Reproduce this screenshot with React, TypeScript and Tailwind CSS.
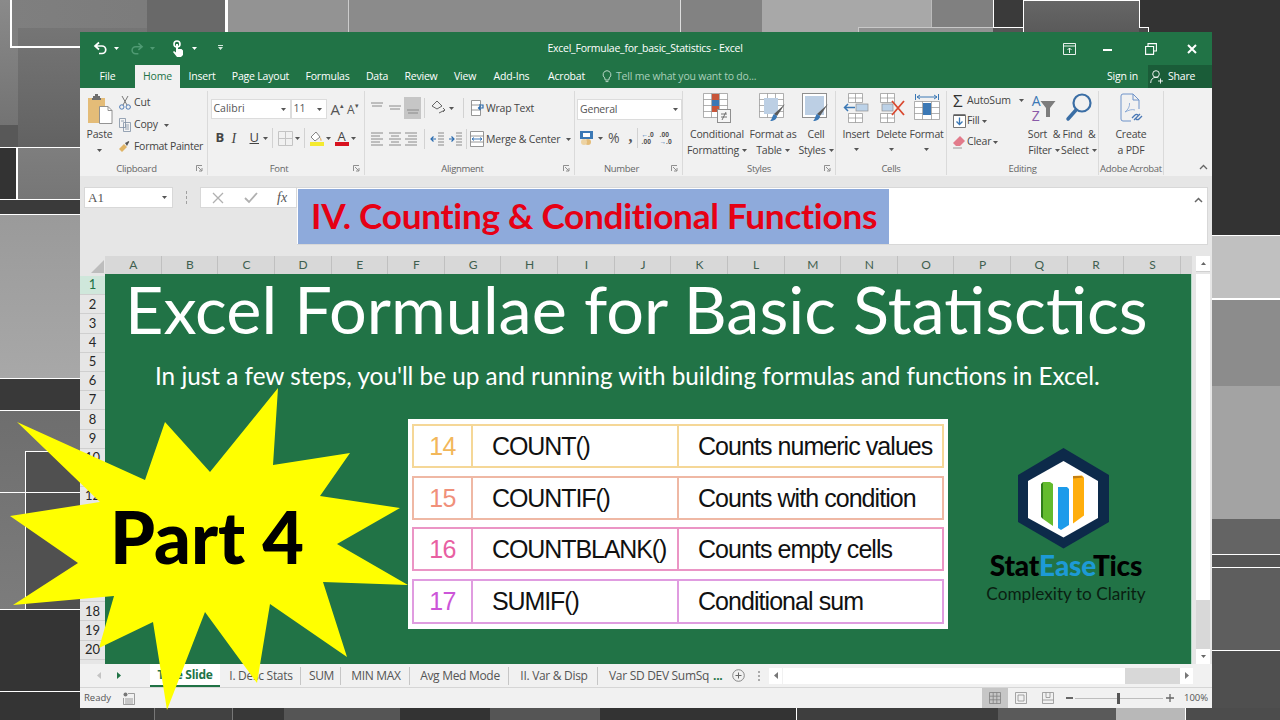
import React from "react";

const ui = "font-['Open_Sans',sans-serif]";
const cal = "font-['Lato',sans-serif]";

const bgRects = [
  "left-[0px] top-[0px] w-[80px] h-[125px] bg-linear-to-b from-[#8a8a8a] to-[#737373]",
  "left-[10px] top-[0px] w-[217px] h-[48px] bg-linear-to-r from-[#7f7f7f] to-[#7a7a7a]",
  "left-[147px] top-[0px] w-[79px] h-[33px] bg-[#696969]",
  "left-[18px] top-[28px] w-[129px] h-[119px] bg-linear-to-b from-[#757575] to-[#626262]",
  "left-[10px] top-[-2px] w-[217px] h-[50px] border-2 border-white",
  "left-[0px] top-[125px] w-[18px] h-[22px] bg-[#585858]",
  "left-[0px] top-[147px] w-[18px] h-[53px] bg-[#333333] border-t border-r-2 border-b border-white",
  "left-[18px] top-[147px] w-[62px] h-[53px] bg-linear-to-b from-[#7e7e7e] to-[#767676] border-t border-b border-white",
  "left-[0px] top-[200px] w-[80px] h-[15px] bg-[#3a3a3a] border-b border-white",
  "left-[0px] top-[215px] w-[80px] h-[163px] bg-linear-to-b from-[#9a9a9a] to-[#a8a8a8]",
  "left-[0px] top-[378px] w-[80px] h-[33px] bg-[#393939] border-t border-b border-white",
  "left-[0px] top-[411px] w-[80px] h-[198px] bg-linear-to-b from-[#6e6e6e] to-[#7c7c7c]",
  "left-[25px] top-[451px] w-[55px] h-[158px] bg-[#505050] border-t border-l border-white",
  "left-[0px] top-[492px] w-[80px] h-[1px] bg-white",
  "left-[0px] top-[609px] w-[80px] h-[111px] bg-[#343434] border-t border-white",
  "left-[0px] top-[691px] w-[80px] h-[1px] bg-white",
  "left-[226px] top-[0px] w-[122px] h-[33px] bg-[#939393] border-l-2 border-white",
  "left-[348px] top-[0px] w-[332px] h-[33px] bg-[#8b8b8b] border-l border-[#cccccc]",
  "left-[680px] top-[0px] w-[82px] h-[33px] bg-[#828282] border-l border-[#dddddd]",
  "left-[762px] top-[0px] w-[169px] h-[33px] bg-[#a8a8a8]",
  "left-[931px] top-[0px] w-[62px] h-[33px] bg-[#808080] border-l border-[#bbbbbb]",
  "left-[858px] top-[27px] w-[136px] h-[6px] bg-[#929292] border-t border-l border-[#c8c8c8]",
  "left-[993px] top-[0px] w-[30px] h-[33px] bg-[#3a3a3a] border-l border-white",
  "left-[993px] top-[27px] w-[30px] h-[6px] bg-[#555555] border-t border-white",
  "left-[1023px] top-[0px] w-[117px] h-[33px] bg-linear-to-b from-[#666666] to-[#5a5a5a] border border-white",
  "left-[1139px] top-[27px] w-[10px] h-[6px] bg-[#4a4a4a] border-t border-r border-white",
  "left-[1212px] top-[235px] w-[68px] h-[65px] bg-[#c0c0c0] border-t border-b-2 border-white",
  "left-[1212px] top-[300px] w-[68px] h-[86px] bg-[#8c8c8c]",
  "left-[1212px] top-[386px] w-[68px] h-[133px] bg-[#a3a3a3]",
  "left-[1212px] top-[519px] w-[68px] h-[35px] bg-[#646464]",
  "left-[1212px] top-[554px] w-[68px] h-[14px] bg-[#555555] border-t border-b border-white",
  "left-[1212px] top-[568px] w-[68px] h-[83px] bg-[#5e5e5e] border-b border-white",
  "left-[1212px] top-[651px] w-[68px] h-[69px] bg-[#4f4f4f]",
  "left-[80px] top-[708px] w-[74px] h-[12px] bg-[#3a3a3a]",
  "left-[154px] top-[708px] w-[78px] h-[12px] bg-[#414141] border-l border-[#777777]",
  "left-[232px] top-[708px] w-[52px] h-[12px] bg-[#383838] border-l border-[#777777]",
  "left-[284px] top-[708px] w-[116px] h-[12px] bg-[#555555]",
  "left-[490px] top-[708px] w-[110px] h-[12px] bg-[#555555]",
  "left-[796px] top-[708px] w-[202px] h-[12px] bg-[#3e3e3e] border-l border-white",
  "left-[998px] top-[708px] w-[118px] h-[12px] bg-[#5a5a5a]",
  "left-[1116px] top-[708px] w-[69px] h-[12px] bg-[#b8b8b8]",
  "left-[1185px] top-[708px] w-[95px] h-[12px] bg-[#4c4c4c] border-l border-white",
];

const Caret = ({ c = "#555", s = "" }: { c?: string; s?: string }) => (
  <svg width="5" height="3" viewBox="0 0 5 3" className={s}><path d="M0 0h5L2.5 3z" fill={c} /></svg>
);

const Sep = ({ s = "" }: { s?: string }) => (
  <div className={`w-px bg-[#d2d2d2] h-[20px] ${s}`} />
);

const Label = ({ t, launcher, center }: { t: string; launcher?: boolean; center?: boolean }) => (
  <div className={`relative h-[13px] flex items-center justify-center text-[9.5px] leading-none text-[#666666] whitespace-nowrap tracking-[-0.3px] ${launcher && !center ? "pr-[14px]" : ""}`}>
    {t}
    {launcher && (
      <svg width="7" height="7" viewBox="0 0 7 7" className="absolute right-[4px] top-[3px]">
        <path d="M.5 6V.5H6M2 2l3.5 3.5M6 3v3H3" fill="none" stroke="#777" strokeWidth="0.8" />
      </svg>
    )}
  </div>
);

const Group = ({ w, label, launcher, center, children }: { w: string; label: string; launcher?: boolean; center?: boolean; children: React.ReactNode }) => (
  <div className={`${w} shrink-0 flex flex-col border-r border-[#dadada] mt-[3px] mb-[1px]`}>
    <div className="flex-1 min-h-0 flex">{children}</div>
    <Label t={label} launcher={launcher} center={center} />
  </div>
);

const Big = ({ w, icon, lines, caret }: { w: string; icon: React.ReactNode; lines: string[]; caret?: boolean }) => (
  <div className={`${w} shrink-0 flex flex-col items-center text-[10.5px] text-[#444444] leading-[16px] whitespace-nowrap tracking-[-0.2px]`}>
    <div className="h-[35px] pt-[2px] flex items-start justify-center">{icon}</div>
    {lines.map((l, i) => (
      <div key={i} className="h-[16px] flex items-center gap-[3px]">
        {l}
        {caret && i === lines.length - 1 && <Caret />}
      </div>
    ))}
    {lines.length === 1 && <Caret s="mt-[6px]" />}
  </div>
);

const TITLE = "Excel_Formulae_for_basic_Statistics - Excel";

const tabs: [string, string][] = [
  ["File", "w-[55px]"],
  ["Home", "w-[45px]"],
  ["Insert", "w-[44px]"],
  ["Page Layout", "w-[73px]"],
  ["Formulas", "w-[61px]"],
  ["Data", "w-[38px]"],
  ["Review", "w-[50px]"],
  ["View", "w-[38px]"],
  ["Add-Ins", "w-[55px]"],
  ["Acrobat", "w-[55px]"],
];

const TitleBar = () => (
  <div className="h-[33px] shrink-0 flex items-center bg-[#217346] text-white">
    <div className="w-[565px] flex items-center pl-[13px]">
      <svg width="15" height="15" viewBox="0 0 15 15"><path d="M6 1.5 2 5l4 3.5M2.5 5H9a3.7 3.7 0 0 1 0 7.5H6" fill="none" stroke="#fff" strokeWidth="1.7" /></svg>
      <Caret c="#fff" s="ml-[6px]" />
      <svg width="14" height="14" viewBox="0 0 15 15" className="ml-[11px]"><path d="M9 1.5 13 5 9 8.5M12.5 5H6a3.7 3.7 0 0 0 0 7.5h3" fill="none" stroke="#4f9a73" strokeWidth="1.6" /></svg>
      <Caret c="#4f9a73" s="ml-[6px]" />
      <svg width="14" height="18" viewBox="0 0 14 18" className="ml-[16px]"><circle cx="6" cy="4" r="3" fill="none" stroke="#fff" strokeWidth="1.6" /><path d="M5 4h2v5h3.5l1.5 1.5V15l-2 2H6L2 12l1-1 2 1.5z" fill="#fff" /></svg>
      <Caret c="#fff" s="ml-[7px]" />
      <svg width="7" height="7" viewBox="0 0 7 7" className="ml-[20px]"><path d="M1 0h5v1H1zM1 2h5L3.5 5z" fill="#d6e8de" /></svg>
    </div>
    <div className={`w-[0px] flex justify-center text-[10.5px] whitespace-nowrap ${ui} tracking-[-0.25px]`}>{TITLE}</div>
    <div className="flex-1 flex items-center justify-end">
      <svg width="13" height="12" viewBox="0 0 13 12" className="mr-[27px]"><path d="M.5.5h12v11H.5zM.5 3h12M6.5 10V5M4.5 7l2-2 2 2" fill="none" stroke="#fff" strokeWidth="0.9" /></svg>
      <div className="w-[9px] h-[2px] bg-white mr-[33px] mt-[2px]" />
      <svg width="12" height="12" viewBox="0 0 12 12" className="mr-[30px]"><path d="M3 3V.6h8.4V8H9M.6 3.5h8V11.4h-8z" fill="none" stroke="#fff" strokeWidth="1.1" /></svg>
      <svg width="10" height="10" viewBox="0 0 10 10" className="mr-[15px]"><path d="M1 1l8 8M9 1l-8 8" stroke="#fff" strokeWidth="2" /></svg>
    </div>
  </div>
);

const TabBar = () => (
  <div className={`h-[23px] shrink-0 flex items-stretch bg-[#217346] text-white text-[10.5px] tracking-[-0.2px] whitespace-nowrap ${ui}`}>
    {tabs.map(([t, w]) => (
      <div key={t} className={`${w} flex items-center justify-center ${t === "Home" ? "bg-[#f1f1f1] text-[#217346]" : ""}`}>{t}</div>
    ))}
    <div className="flex items-center ml-[8px] text-[#a9cfba]">
      <svg width="10" height="13" viewBox="0 0 10 13" className="mr-[4px]"><path d="M5 .7a4 4 0 0 1 2.3 7.2L6.8 10H3.2l-.5-2.1A4 4 0 0 1 5 .7zM3.6 11.6h2.8" fill="none" stroke="#c9e2d5" strokeWidth="0.9" /></svg>
      Tell me what you want to do...
    </div>
    <div className="flex-1" />
    <div className="flex items-center mr-[10px]">Sign in</div>
    <div className="w-[64px] bg-[#1a5c38] flex items-center pl-[2px] gap-[4px]">
      <svg width="14" height="14" viewBox="0 0 14 14"><circle cx="6" cy="4" r="3.3" fill="none" stroke="#fff" strokeWidth="0.9" /><path d="M.7 13c0-3.4 2-5.7 5.3-5.7 1 0 1.700.2 2.300.5M10.500 8.500v5M8 11h5" fill="none" stroke="#fff" strokeWidth="0.9" /></svg>
      Share
    </div>
  </div>
);

const cellLines = "#8f8f8f";

const PasteIcon = () => (
  <svg width="26" height="32" viewBox="0 0 26 32">
    <rect x="1" y="4" width="17" height="25" fill="#e4bc78" />
    <path d="M6 4V2h2V0h3v2h2v2h1v2H5V4z" fill="#6d6d6d" />
    <path d="M12.500 12.500H21l4 4v13H12.500z" fill="#fff" stroke="#888" strokeWidth="0.9" />
    <path d="M21 12.500v4h4" fill="none" stroke="#888" strokeWidth="0.9" />
  </svg>
);

const Clipboard = () => (
  <Group w="w-[128px]" label="Clipboard" launcher>
    <div className="w-[39px] flex flex-col items-center text-[10.5px] text-[#444444] tracking-[-0.2px]">
      <div className="mt-[3px]"><PasteIcon /></div>
      <div className="mt-[1px] leading-[14px]">Paste</div>
      <Caret s="mt-[8px]" />
    </div>
    <div className="flex flex-col text-[10.5px] text-[#444444] tracking-[-0.2px] whitespace-nowrap pt-[1px]">
      <div className="h-[22px] flex items-center gap-[3px]">
        <svg width="12" height="14" viewBox="0 0 12 14"><path d="M3 0l5 9M9 0 4 9" stroke="#777" strokeWidth="1" /><circle cx="2.800" cy="11" r="2.200" fill="none" stroke="#4e7ab5" /><circle cx="9.200" cy="11" r="2.200" fill="none" stroke="#4e7ab5" /></svg>
        Cut
      </div>
      <div className="h-[22px] flex items-center gap-[3px]">
        <svg width="12" height="14" viewBox="0 0 12 14"><path d="M.5.5h6v9h-6zM4.500 4.500h7v9h-7zM2 3h3M6 7h4M6 9h4M6 11h4" fill="#f4f4f4" stroke="#7f8fa3" strokeWidth="0.8" /></svg>
        <span>Copy</span>
        <Caret s="ml-[3px]" />
      </div>
      <div className="h-[22px] flex items-center gap-[2px]">
        <svg width="13" height="12" viewBox="0 0 13 12"><path d="M0 8l5-5 3 3-5 5z" fill="#e0b465" /><path d="M6 2l2-1 1.500-1 .8.800L9 3l-1 2z" fill="#555" /></svg>
        <span className="tracking-[-0.3px]">Format Painter</span>
      </div>
    </div>
  </Group>
);

const Inp = ({ w, t }: { w: string; t: string }) => (
  <div className={`${w} h-[20px] bg-white border border-[#dcdcdc] flex items-center pl-[2px] pr-[4px] justify-between text-[10.5px] text-[#555555]`}>
    {t}
    <Caret />
  </div>
);

const FontG = () => (
  <Group w="w-[157px]" label="Font" launcher>
    <div className="flex flex-col pl-[2.500px] pt-[8px]">
      <div className="flex items-center">
        <Inp w="w-[80px]" t="Calibri" />
        <Inp w="w-[36px]" t="11" />
        <span className={`ml-[4px] text-[15px] leading-none text-[#555555] ${ui}`}>A</span>
        <span className="text-[7px] leading-none self-start text-[#555555] mt-[3px]">▴</span>
        <span className={`ml-[3px] text-[12px] leading-none text-[#555555] mt-[2px] ${ui}`}>A</span>
        <span className="text-[7px] leading-none self-start text-[#555555] mt-[3px]">▾</span>
      </div>
      <div className="flex items-center h-[20px] mt-[9px] pl-[5px] text-[#444444] text-[13px]">
        <span className={`w-[16px] font-bold ${ui}`}>B</span>
        <span className="w-[18px] italic font-['Liberation_Serif',serif] text-[14px]">I</span>
        <span className="underline font-['Open_Sans',sans-serif] w-[13px]">U</span>
        <Caret />
        <Sep s="ml-[4px]" />
        <svg width="15" height="15" viewBox="0 0 15 15" className="ml-[5px]"><path d="M.5.5h14v14H.5zM7.500.5v14M.5 7.500h14" fill="none" stroke="#c4c4c4" /></svg>
        <Caret s="ml-[2px]" />
        <Sep s="ml-[4px]" />
        <svg width="15" height="16" viewBox="0 0 15 16" className="ml-[4px]"><path d="M2 7l5-5 4 5-5 4z" fill="#fff" stroke="#666" strokeWidth="0.8" /><path d="M11 7c2 2 2 4 1 4s-1-2-1-4z" fill="#e4bc78" /><rect x="1" y="12" width="14" height="4" fill="#f4ea2f" /></svg>
        <Caret s="ml-[2px]" />
        <div className="ml-[4px] w-[14px] h-[16px] flex flex-col items-center">
          <span className={`text-[13px] leading-[12px] text-[#444444] ${ui}`}>A</span>
          <div className="w-[14px] h-[4px] bg-[#d8121f]" />
        </div>
        <Caret s="ml-[2px]" />
      </div>
    </div>
  </Group>
);

const AlignIcon = ({ kind }: { kind: string }) => {
  const rows: Record<string, string> = {
    top: "M1 2h12M2 5h10",
    mid: "M1 5h12M2 8h10",
    bot: "M1 9h12M2 12h10",
    l: "M1 1h12M1 4h9M1 7h12M1 10h9M1 13h12",
    c: "M1 1h12M3 4h8M1 7h12M3 10h8M1 13h12",
    r: "M1 1h12M4 4h9M1 7h12M4 10h9M1 13h12",
  };
  return (
    <svg width="14" height="14" viewBox="0 0 14 14"><path d={rows[kind]} stroke="#8a8a8a" strokeWidth="1" /></svg>
  );
};

const Alignment = () => (
  <Group w="w-[210px]" label="Alignment" launcher>
    <div className="flex flex-col pl-[5px] pt-[5px] text-[10.5px] text-[#444444] tracking-[-0.2px] whitespace-nowrap">
      <div className="flex items-center h-[24px]">
        <div className="w-[18px]"><AlignIcon kind="top" /></div>
        <div className="w-[16px]"><AlignIcon kind="mid" /></div>
        <div className="w-[17px] h-[22px] bg-[#c6c6c6] flex items-center justify-center"><AlignIcon kind="bot" /></div>
        <Sep s="ml-[3px]" />
        <svg width="16" height="16" viewBox="0 0 16 16" className="ml-[6px]"><path d="M1 6l5-5 5 5-5 3zM8 13l6-3M12 8l2 2-2 2" fill="none" stroke="#666" strokeWidth="1" /></svg>
        <Caret s="ml-[2px]" />
        <Sep s="ml-[9px]" />
        <svg width="14" height="16" viewBox="0 0 14 16" className="ml-[7px]"><path d="M.5.500h9v15h-9zM.5 5h9M.5 10h9" fill="#fff" stroke="#8a8a8a" strokeWidth="0.9" /><path d="M8 5h4v3H8M9.500 6l-2 2 2 2" fill="none" stroke="#2b6cb0" strokeWidth="1.200" /></svg>
        <span className="ml-[1px] pt-[2px]">Wrap Text</span>
      </div>
      <div className="flex items-center h-[24px] mt-[7px]">
        <div className="w-[18px]"><AlignIcon kind="l" /></div>
        <div className="w-[16px]"><AlignIcon kind="c" /></div>
        <div className="w-[17px]"><AlignIcon kind="r" /></div>
        <Sep s="ml-[3px]" />
        <svg width="14" height="14" viewBox="0 0 14 14" className="ml-[5px]"><path d="M8 1h6M8 4h6M8 7h6M8 10h6M8 13h6" stroke="#8a8a8a" /><path d="M6 7H1M3.500 4.500 1 7l2.500 2.500" fill="none" stroke="#2b6cb0" strokeWidth="1.200" /></svg>
        <svg width="14" height="14" viewBox="0 0 14 14" className="ml-[4px]"><path d="M8 1h6M8 4h6M8 7h6M8 10h6M8 13h6" stroke="#8a8a8a" /><path d="M1 7h5M3.500 4.500 6 7 3.500 9.500" fill="none" stroke="#2b6cb0" strokeWidth="1.200" /></svg>
        <Sep s="ml-[4px]" />
        <svg width="14" height="16" viewBox="0 0 14 16" className="ml-[3px]"><path d="M.5.500h13v15H.5zM.5 5h13M.5 11h13" fill="#fff" stroke="#8a8a8a" strokeWidth="0.9" /><path d="M2 8h10M4 6.500 2 8l2 1.500M10 6.500 12 8l-2 1.500" fill="none" stroke="#2b6cb0" strokeWidth="0.9" /></svg>
        <span className="ml-[2px] pt-[2px]">Merge &amp; Center</span>
        <Caret s="ml-[6px]" />
      </div>
    </div>
  </Group>
);

const NumberG = () => (
  <Group w="w-[108px]" label="Number" launcher>
    <div className="flex flex-col pl-[2px] pt-[8px]">
      <div className="w-[105px] h-[21px] bg-white border border-[#dcdcdc] flex items-center justify-between pl-[2px] pr-[3px] text-[10.5px] text-[#555555] tracking-[-0.2px]">
        General<Caret />
      </div>
      <div className="flex items-center h-[20px] mt-[8px] pl-[3px] text-[#555555]">
        <svg width="15" height="15" viewBox="0 0 15 15"><rect x="0" y="0" width="13" height="8" fill="#3b78b5" /><rect x="3" y="2" width="7" height="4" fill="#fff" /><circle cx="8" cy="11" r="3" fill="#e4bc78" /><circle cx="4" cy="11" r="3" fill="#edd3a3" /></svg>
        <Caret s="ml-[3px]" />
        <span className={`ml-[5px] text-[14px] ${ui} leading-none`}>%</span>
        <span className="ml-[9px] text-[16px] font-bold leading-none font-['Liberation_Serif',serif] mb-[3px]">,</span>
        <Sep s="ml-[4px]" />
        <div className={`ml-[4px] w-[17px] text-[6.5px] leading-[7px] font-bold text-[#555555] ${ui}`}><span className="text-[#2b6cb0]">←</span>.0<br />.00</div>
        <div className={`ml-[1px] w-[15px] text-[6.5px] leading-[7px] font-bold text-[#555555] ${ui}`}>.00<br /><span className="text-[#2b6cb0]">→</span>.0</div>
      </div>
    </div>
  </Group>
);

const GridBase = ({ fill }: { fill?: React.ReactNode }) => (
  <>
    <path d="M.5.5h24v24H.5zM.5 6.500h24M.5 12.500h24M.5 18.500h24M8.500.5v24M16.500.5v24" fill="#fff" stroke={cellLines} strokeWidth="0.7" />
    {fill}
  </>
);

const Brush = () => (
  <>
    <path d="M26 11 18 23l-3-2z" fill="#5a5a5a" />
    <path d="M15 21l3 2c0 3-3 5-7 5 2-1 2-5 4-7z" fill="#3b78b5" />
  </>
);

const Styles = () => (
  <Group w="w-[153px]" label="Styles" launcher center>
    <div className="flex pl-[2px]">
      <Big w="w-[64px]" lines={["Conditional", "Formatting"]} caret icon={
        <svg width="28" height="30" viewBox="0 0 28 30"><GridBase fill={<><rect x="9" y="1" width="7" height="6" fill="#c8563a" /><rect x="9" y="7" width="7" height="6" fill="#3b78b5" /><rect x="9" y="13" width="7" height="6" fill="#c8563a" /></>} /><rect x="14.500" y="16.500" width="13" height="13" fill="#f6f6f6" stroke="#8f8f8f" /><path d="M18 21h6M18 24h6M23 19l-4 8" stroke="#555" strokeWidth="0.8" /></svg>
      } />
      <Big w="w-[48px]" lines={["Format as", "Table"]} caret icon={
        <svg width="28" height="30" viewBox="0 0 28 30"><GridBase fill={<rect x="5" y="5" width="14" height="16" fill="#bccfe4" />} /><Brush /></svg>
      } />
      <Big w="w-[38px]" lines={["Cell", "Styles"]} caret icon={
        <svg width="28" height="30" viewBox="0 0 28 30"><rect x=".5" y=".5" width="24" height="24" fill="#fff" stroke="#8f8f8f" /><rect x="3" y="3" width="19" height="19" fill="#bccfe4" /><Brush /></svg>
      } />
    </div>
  </Group>
);

const Cells = () => (
  <Group w="w-[111px]" label="Cells">
    <div className="flex pl-[2px]">
      <Big w="w-[36px]" lines={["Insert"]} icon={
        <svg width="26" height="30" viewBox="0 0 26 30"><path d="M5.500.5h14v9h-14zM12.500.5v9M5.500 20.500h14v9h-14zM12.500 20.500v9M5.500 25h14M5.500 5h14" fill="#fff" stroke="#8f8f8f" strokeWidth="0.7" /><rect x="13" y="11" width="12" height="7" fill="#bcd2e8" stroke="#8f8f8f" strokeWidth="0.7" /><path d="M12 14.500H2M5 11l-3.500 3.500L5 18" fill="none" stroke="#3b78b5" strokeWidth="1.500" /></svg>
      } />
      <Big w="w-[35px]" lines={["Delete"]} icon={
        <svg width="26" height="30" viewBox="0 0 26 30"><path d="M1.500.5h14v9h-14zM8.500.5v9M1.500 20.500h14v9h-14zM8.500 20.500v9M1.500 25h14M1.500 5h14" fill="#fff" stroke="#8f8f8f" strokeWidth="0.7" /><rect x="3" y="11" width="11" height="7" fill="#bcd2e8" stroke="#8f8f8f" strokeWidth="0.7" /><path d="M13 8l12 14M25 8 13 22" stroke="#d9482f" strokeWidth="1.800" /></svg>
      } />
      <Big w="w-[35px]" lines={["Format"]} icon={
        <svg width="26" height="30" viewBox="0 0 26 30"><path d="M1.500 1v6M24.500 1v6M3 4h20M6 2 3 4l3 2M20 2l3 2-3 2" fill="none" stroke="#3b78b5" strokeWidth="1" /><path d="M.5 8.500h25v18H.5zM8.500 8.500v18M17.500 8.500v18M.5 14.500h25M.5 20.500h25" fill="#fff" stroke="#8f8f8f" strokeWidth="0.7" /><rect x="9" y="10" width="8" height="12" fill="#3b78b5" /></svg>
      } />
    </div>
  </Group>
);

const Editing = () => (
  <Group w="w-[152px]" label="Editing">
    <div className="flex pl-[6px] text-[10.5px] text-[#444444] tracking-[-0.2px] whitespace-nowrap">
      <div className="w-[74px] flex flex-col">
        <div className="h-[19px] flex items-center"><span className={`w-[14px] text-[17px] leading-none text-[#333333] ${ui}`}>Σ</span>AutoSum<Caret s="ml-[8px]" /></div>
        <div className="h-[22px] flex items-center">
          <svg width="13" height="14" viewBox="0 0 13 14" className="mr-[1px]"><path d="M.5 1.500h12v12H.5z" fill="#fff" stroke="#777" /><path d="M.5 1h12" stroke="#555" strokeWidth="1.500" /><path d="M6.500 3.500v7M3.500 7.500l3 3 3-3" fill="none" stroke="#3b78b5" strokeWidth="1.300" /></svg>
          Fill<Caret s="ml-[2px]" />
        </div>
        <div className="h-[20px] flex items-center">
          <svg width="13" height="13" viewBox="0 0 13 13" className="mr-[1px]"><path d="M7 0l5 5-5 5H3L0 7z" fill="#e27b8b" /><path d="M0 12h9" stroke="#999" /></svg>
          Clear<Caret s="ml-[2px]" />
        </div>
      </div>
      <Big w="w-[34px] [word-spacing:3px]" lines={["Sort &", "Filter"]} caret icon={
        <div className="flex items-start">
          <div className={`flex flex-col text-[14px] leading-[15px] ${ui}`}>
            <span className="text-[#3b78b5]">A</span>
            <span className="text-[#8a5aa8]">Z</span>
          </div>
          <svg width="16" height="18" viewBox="0 0 16 18" className="mt-[8px]"><path d="M.5 0h15L10 7v9H6V7z" fill="#7d7d7d" /></svg>
        </div>
      } />
      <Big w="w-[36px] [word-spacing:3px]" lines={["Find &", "Select"]} caret icon={
        <svg width="28" height="30" viewBox="0 0 28 30"><circle cx="17" cy="10" r="8.500" fill="none" stroke="#3b6ea5" strokeWidth="2.200" /><path d="M11 17 3 26" stroke="#3b6ea5" strokeWidth="3.500" strokeLinecap="round" /></svg>
      } />
    </div>
  </Group>
);

const AcrobatG = () => (
  <Group w="w-[65px]" label="Adobe Acrobat">
    <Big w="w-[64px]" lines={["Create", "a PDF"]} icon={
      <svg width="26" height="30" viewBox="0 0 26 30"><path d="M13 28H5a2 2 0 0 1-2-2V3a2 2 0 0 1 2-2h10l6 6v9M15 1v6h6" fill="none" stroke="#6f93c9" strokeWidth="1" /><path d="M7 19c3-2 5-6 4.500-9M7 19c4-2 7-3 10-2" fill="none" stroke="#7ea0d0" strokeWidth="0.8" /><path d="M16 27l6-6M14 25l3-3a2 2 0 0 1 3 0M24 23l-3 3a2 2 0 0 1-3 0" fill="none" stroke="#4a78b5" strokeWidth="1.300" /></svg>
    } />
  </Group>
);

const Ribbon = () => (
  <div className={`h-[88px] shrink-0 bg-[#f1f1f1] flex ${ui}`}>
    <Clipboard />
    <FontG />
    <Alignment />
    <NumberG />
    <Styles />
    <Cells />
    <Editing />
    <AcrobatG />
    <div className="flex-1 flex items-end justify-center pb-[6px] pl-[30px]">
      <svg width="9" height="6" viewBox="0 0 9 6"><path d="M1 5l3.500-3.500L8 5" fill="none" stroke="#666" strokeWidth="1.300" /></svg>
    </div>
  </div>
);

const FormulaArea = () => (
  <div className="h-[80px] shrink-0 bg-[#e6e6e6] flex items-start pt-[11px] pl-[4px]">
    <div className="w-[89px] h-[21px] bg-white border border-[#d8d8d8] flex items-center justify-between pl-[3px] pr-[5px] text-[13px] text-[#555555] font-['Liberation_Serif',serif]">
      A1<Caret />
    </div>
    <div className="w-[27px] h-[21px] flex flex-col items-center justify-center gap-[2px]">
      <div className="w-[1.500px] h-[3px] bg-[#a0a0a0]" />
      <div className="w-[1.500px] h-[3px] bg-[#a0a0a0]" />
      <div className="w-[1.500px] h-[3px] bg-[#a0a0a0]" />
    </div>
    <div className="w-[97px] h-[21px] bg-white border border-[#d8d8d8] flex items-center pl-[11px]">
      <svg width="12" height="12" viewBox="0 0 12 12"><path d="M1 1l10 10M11 1 1 11" stroke="#b0b0b0" strokeWidth="1.300" /></svg>
      <svg width="14" height="12" viewBox="0 0 14 12" className="ml-[20px]"><path d="M1 6l4 4 8-9" fill="none" stroke="#b0b0b0" strokeWidth="1.800" /></svg>
      <span className="ml-[19px] italic text-[14px] text-[#555555] font-['Liberation_Serif',serif]">fx</span>
    </div>
    <div className="w-[911px] h-[58px] bg-white border border-[#d8d8d8] border-l-0 flex items-start pl-[1px] pt-[1px]">
      <div className={`w-[591px] h-[55px] bg-[#8eaadb] flex items-center pl-[13px] pb-[2px] text-[35.200px] font-bold text-[#e60014] whitespace-nowrap tracking-[-0.300px] ${cal}`}>
        IV. Counting &amp; Conditional Functions
      </div>
      <div className="flex-1 flex justify-end pr-[4px] pt-[8px]">
        <svg width="9" height="6" viewBox="0 0 9 6"><path d="M1 5l3.500-3.500L8 5" fill="none" stroke="#666" strokeWidth="1.500" /></svg>
      </div>
    </div>
  </div>
);

const cols = "ABCDEFGHIJKLMNOPQRS".split("");

const ColHeader = () => (
  <div className={`h-[18px] shrink-0 flex bg-[#e6e6e6] text-[12px] text-[#3f5f4f] ${cal}`}>
    <div className="w-[25px] h-full flex items-end justify-end pr-[1px] pb-[1px]">
      <svg width="13" height="13" viewBox="0 0 13 13"><path d="M13 0v13H0z" fill="#bdbdbd" /></svg>
    </div>
    <div className="w-[1087px] flex bg-[#d8d8d8]">
      {cols.map((c) => (
        <div key={c} className="w-[56.630px] shrink-0 flex items-center justify-center border-r border-[#c0c0c0] pl-[1px]">{c}</div>
      ))}
    </div>
    <div className="flex-1 flex pl-[4px]">
      <div className="w-[14px] h-[16px] bg-white flex items-center justify-center border-b border-[#d0d0d0]"><Caret c="#666" s="scale-y-[-1]" /></div>
    </div>
  </div>
);

const RowHeader = () => (
  <div className={`w-[25px] shrink-0 bg-[#e6e6e6] text-[13px] text-[#262626] pt-[2px] ${cal}`}>
    {Array.from({ length: 20 }, (_, i) => i + 1).map((n) => (
      <div key={n} className={`h-[19.200px] flex items-center justify-center border-b border-[#cfcfcf] ${n === 1 ? "bg-[#cfe7db] text-[#217346]" : ""}`}>{n}</div>
    ))}
  </div>
);

const rows = [
  ["14", "COUNT()", "Counts numeric values", "border-[#f5d797]", "text-[#f2b75a]", "h-[44px]"],
  ["15", "COUNTIF()", "Counts with condition", "border-[#efb8a4]", "text-[#f0907a]", "h-[44px]"],
  ["16", "COUNTBLANK()", "Counts empty cells", "border-[#eb95c5]", "text-[#e85fa2]", "h-[44px]"],
  ["17", "SUMIF()", "Conditional sum", "border-[#e09ce0]", "text-[#cc55d8]", "h-[45px]"],
];

const FuncTable = () => (
  <div className="w-[540px] h-[210px] bg-white pt-[5px] pl-[4px] flex flex-col gap-[7.500px] font-['Liberation_Sans',sans-serif]">
    {rows.map(([n, f, d, b, c, h]) => (
      <div key={n} className={`w-[532px] ${h} border-2 ${b} flex items-center text-[25px] text-[#111111] whitespace-nowrap`}>
        <div className={`w-[59px] h-full shrink-0 flex items-center justify-center border-r-2 tracking-[-0.600px] pt-[2px] ${b} ${c}`}>{n}</div>
        <div className={`w-[206px] h-full shrink-0 flex items-center pl-[19px] border-r-2 pt-[2px] tracking-[-1.100px] ${b}`}>{f}</div>
        <div className="pl-[19px] pt-[2px] tracking-[-0.950px]">{d}</div>
      </div>
    ))}
  </div>
);

const Logo = () => (
  <div className="flex flex-col items-center w-[170px]">
    <svg width="92" height="101" viewBox="1018 448 92 101" className="mr-[5px]">
      <path d="M1063.500 448 1109 475v47l-45.500 26.500L1018 522v-47z" fill="#0d2a4a" />
      <path d="M1063.500 461 1098 481v37l-34.500 19.500L1028 518v-37z" fill="#fff" />
      <path d="M1043 482h7l3 2v42l-10-7z" fill="#63bb2e" />
      <path d="M1043 482v37l-2-2v-33z" fill="#2f7d1a" />
      <path d="M1058 487h9l2 2v36l-8 5-3-2z" fill="#1c9bea" />
      <path d="M1073 476l9-.500 2 2v38l-11 8z" fill="#ffae0c" />
      <path d="M1073 476h8l2 1.500-10 1z" fill="#c57f10" />
    </svg>
    <div className={`text-[28px] font-black leading-[33px] text-black whitespace-nowrap tracking-[-0.200px] ${cal}`}>
      Stat<span className="text-[#1d9ad6]">Ease</span>Tics
    </div>
    <div className={`text-[17.200px] leading-[24px] text-[#0a1f12] whitespace-nowrap ${cal}`}>Complexity to Clarity</div>
  </div>
);

const Star = () => (
  <div className="absolute left-[0px] top-[380px] w-[420px] h-[340px] pointer-events-none">
    <svg width="420" height="340" viewBox="0 380 420 340" className="absolute inset-0">
      <polygon fill="#ffff00" points="17,422 145,480 165,422 210,472 278,388 273,465 350,453 320,496 400,508 337,544 408,585 323,582 347,657 270,604 257,683 205,612 167,710 153,622 99,648 114,596 13,605 78,563 10,516 100,502" />
    </svg>
    <div className={`absolute left-[110px] top-[113px] text-[72px] leading-[86px] font-black text-black whitespace-nowrap ${cal}`}>Part 4</div>
  </div>
);

const Sheet = () => (
  <div className="flex-1 bg-[#217346] flex flex-col border-r border-[#b5dcc8]">
    <div className={`pl-[20px] h-[80px] text-[66.600px] leading-[68px] text-white whitespace-nowrap font-normal ${cal}`}>Excel Formulae for Basic Statisctics</div>
    <div className={`pl-[50px] mt-[7px] h-[30px] text-[24.300px] leading-[30px] text-white whitespace-nowrap ${cal}`}>In just a few steps, you'll be up and running with building formulas and functions in Excel.</div>
    <div className="flex pl-[303px] mt-[28px]">
      <FuncTable />
      <div className="ml-[33px] mt-[29px]"><Logo /></div>
    </div>
  </div>
);

const VScroll = () => (
  <div className="w-[20px] shrink-0 bg-[#e6e6e6] pl-[4px] pr-[2px] flex flex-col">
    <div className="h-[326px] bg-white" />
    <div className="flex-1 bg-[#d8d8d8]" />
    <div className="h-[15px] bg-white flex items-center justify-center"><Caret c="#666" /></div>
  </div>
);

const sheetTabs: [string, string][] = [
  ["I. Desc Stats", "w-[81px]"],
  ["SUM", "w-[40px]"],
  ["MIN MAX", "w-[69px]"],
  ["Avg Med Mode", "w-[99px]"],
  ["II. Var & Disp", "w-[89px]"],
];

const SheetTabs = () => (
  <div className={`h-[24px] shrink-0 bg-[#f1f1f1] border-b border-[#d6d6d6] flex items-center text-[12px] text-[#555555] whitespace-nowrap ${ui} tracking-[-0.300px]`}>
    <div className="w-[70px] flex items-center pl-[17px] gap-[16px]">
      <svg width="4" height="7" viewBox="0 0 4 7"><path d="M4 0v7L0 3.500z" fill="#c4c4c4" /></svg>
      <svg width="4" height="7" viewBox="0 0 4 7"><path d="M0 0v7l4-3.500z" fill="#217346" /></svg>
    </div>
    <div className="w-[70px] h-full bg-white border-b-2 border-[#217346] flex items-center justify-center font-bold text-[#217346]">Title Slide</div>
    <div className="flex items-center h-full">
      {sheetTabs.map(([t, w]) => (
        <div key={t} className={`${w} h-[18px] flex items-center justify-center border-r border-[#c6c6c6] pl-[2px]`}>{t}</div>
      ))}
    </div>
    <div className="w-[132px] pl-[11px] flex items-center">Var SD DEV SumSq<span className="ml-[4px] font-bold text-[#217346]">...</span></div>
    <svg width="13" height="13" viewBox="0 0 13 13" className="ml-[2px]"><circle cx="6.500" cy="6.500" r="5.800" fill="none" stroke="#888" /><path d="M3.500 6.500h6M6.500 3.500v6" stroke="#666" /></svg>
    <div className="w-[2px] h-[2px] ml-[13px] bg-[#aaaaaa] shadow-[0_-4px_0_#aaaaaa,0_4px_0_#aaaaaa]" />
    <div className="ml-[9px] w-[13px] h-[16px] bg-white flex items-center justify-center">
      <svg width="4" height="7" viewBox="0 0 4 7"><path d="M4 0v7L0 3.500z" fill="#777" /></svg>
    </div>
    <div className="ml-[1px] w-[342px] h-[16px] bg-white" />
    <div className="w-[55px] h-[16px] bg-[#d8d8d8]" />
    <div className="w-[13px] h-[16px] bg-white flex items-center justify-center">
      <svg width="4" height="7" viewBox="0 0 4 7"><path d="M0 0v7l4-3.500z" fill="#777" /></svg>
    </div>
  </div>
);

const StatusBar = () => (
  <div className={`h-[20px] shrink-0 bg-[#f1f1f1] flex items-center text-[9.500px] text-[#555555] whitespace-nowrap ${ui}`}>
    <div className="pl-[4px] w-[43px]">Ready</div>
    <svg width="12" height="13" viewBox="0 0 12 13"><circle cx="2.500" cy="2.500" r="2" fill="#777" /><path d="M5 1.500h6.500v11H.5V6" fill="none" stroke="#888" strokeWidth="0.8" /><path d="M2 7h8M2 9h8M2 11h8" stroke="#888" strokeWidth="0.8" /></svg>
    <div className="flex-1" />
    <div className="w-[26px] h-full bg-[#c6c6c6] flex items-center justify-center">
      <svg width="12" height="12" viewBox="0 0 12 12"><path d="M.5.500h11v11H.5zM4.200.5v11M7.800.5v11M.5 4.200h11M.5 7.800h11" fill="none" stroke="#808080" strokeWidth="0.8" /></svg>
    </div>
    <svg width="12" height="12" viewBox="0 0 12 12" className="ml-[7px]"><path d="M.5.500h11v11H.5zM3 3h6v6H3z" fill="none" stroke="#909090" strokeWidth="0.8" /></svg>
    <svg width="12" height="12" viewBox="0 0 12 12" className="ml-[15px]"><path d="M.5.500h11v11H.5zM4 .5v5h4v-5M.5 8h11" fill="none" stroke="#909090" strokeWidth="0.8" /></svg>
    <div className="ml-[12px] w-[7px] h-[1.500px] bg-[#666666]" />
    <div className="ml-[2px] w-[88px] h-[1px] bg-[#bdbdbd] flex items-center pl-[42px]">
      <div className="w-[3px] h-[11px] bg-[#555555]" />
    </div>
    <svg width="8" height="8" viewBox="0 0 8 8" className="ml-[3px]"><path d="M0 4h8M4 0v8" stroke="#666" strokeWidth="1.300" /></svg>
    <div className="w-[38px] pl-[10px] pr-[4px]">100%</div>
  </div>
);

export default function App() {
  return (
    <div className="relative w-[1280px] h-[720px] overflow-hidden bg-[#333333]">
      {bgRects.map((r) => (
        <div key={r} className={`absolute box-border ${r}`} />
      ))}
      <div className="absolute left-[80px] top-[32px] w-[1132px] h-[676px] flex flex-col bg-[#e6e6e6]">
        <TitleBar />
        <TabBar />
        <Ribbon />
        <FormulaArea />
        <ColHeader />
        <div className="h-[390px] shrink-0 flex min-h-0">
          <RowHeader />
          <Sheet />
          <VScroll />
        </div>
        <SheetTabs />
        <StatusBar />
      </div>
      <Star />
    </div>
  );
}
